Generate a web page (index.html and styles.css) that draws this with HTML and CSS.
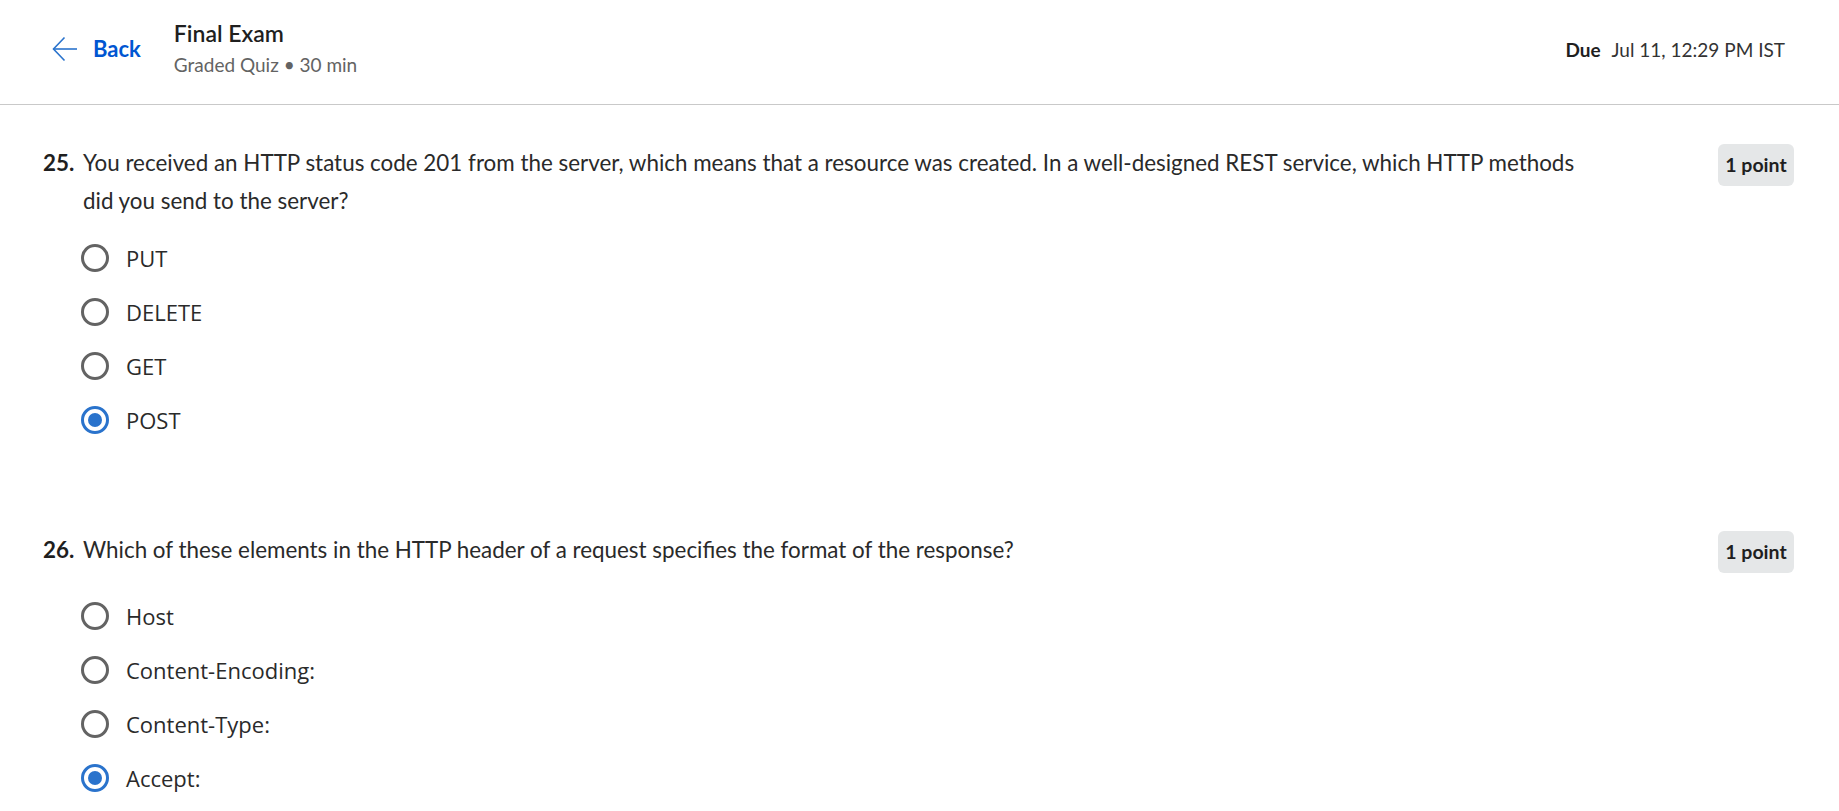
FILE: index.html
```html
<!DOCTYPE html>
<html>
<head>
<meta charset="utf-8">
<link rel="stylesheet" href="styles.css">
</head>
<body>
<header class="topbar">
  <div class="topbar-left">
    <a class="back" href="#">
      <svg class="back-icon" width="26" height="26" viewBox="0 0 26 26" fill="none" stroke="currentColor" stroke-width="1.6">
        <path d="M25 13H1.5"/>
        <path d="M12.5 1.5L1.5 13l11 11.5"/>
      </svg>
      <span>Back</span>
    </a>
    <div class="title-block">
      <div class="title">Final Exam</div>
      <div class="subtitle">Graded Quiz • 30 min</div>
    </div>
  </div>
  <div class="due"><b>Due</b><span>Jul 11, 12:29 PM IST</span></div>
</header>

<main class="content">
  <section class="question q1">
    <div class="q-head">
      <span class="q-num">25.</span>
      <p class="q-text">You received an HTTP status code 201 from the server, which means that a resource was created. In a well-designed REST service, which HTTP methods did you send to the server?</p>
      <span class="badge">1 point</span>
    </div>
    <ul class="options">
      <li class="option"><span class="radio"></span><span class="label">PUT</span></li>
      <li class="option"><span class="radio"></span><span class="label">DELETE</span></li>
      <li class="option"><span class="radio"></span><span class="label">GET</span></li>
      <li class="option"><span class="radio checked"></span><span class="label">POST</span></li>
    </ul>
  </section>

  <section class="question q2">
    <div class="q-head">
      <span class="q-num">26.</span>
      <p class="q-text">Which of these elements in the HTTP header of a request specifies the format of the response?</p>
      <span class="badge">1 point</span>
    </div>
    <ul class="options">
      <li class="option"><span class="radio"></span><span class="label">Host</span></li>
      <li class="option"><span class="radio"></span><span class="label">Content-Encoding:</span></li>
      <li class="option"><span class="radio"></span><span class="label">Content-Type:</span></li>
      <li class="option"><span class="radio checked"></span><span class="label">Accept:</span></li>
    </ul>
  </section>
</main>
</body>
</html>
```

FILE: styles.css
```css
* { box-sizing: border-box; }
html, body { margin: 0; padding: 0; background: #fff; }
body {
  font-family: Lato, "Liberation Sans", sans-serif;
  color: #1f1f1f;
  overflow: hidden;
}

.topbar {
  height: 105px;
  border-bottom: 1px solid #c9c9c9;
  display: flex;
  justify-content: space-between;
  align-items: flex-start;
  padding: 0 54px 0 52px;
}
.topbar-left { display: flex; align-items: flex-start; }
.back {
  display: flex;
  align-items: center;
  color: #0056d2;
  text-decoration: none;
  font-weight: 700;
  font-size: 22px;
  margin-top: 36px;
  height: 26px;
}
.back-icon { color: #2a73cc; margin-right: 15px; }
.back span { line-height: 26px; }
.title-block { margin-left: 33px; margin-top: 19px; }
.title { font-size: 23px; font-weight: 600; color: #1f1f1f; line-height: 28px; }
.subtitle { font-size: 19px; color: #636363; line-height: 26px; margin-top: 5px; }
.due { margin-top: 38px; font-size: 19px; line-height: 24px; color: #333; }
.due b { font-weight: 700; color: #1f1f1f; margin-right: 11px; }

.content { padding: 39px 45px 0 43px; }
.question { margin-bottom: 84px; }
.q-head { display: flex; align-items: flex-start; }
.q-num { font-weight: 700; font-size: 22.4px; line-height: 37.5px; width: 40px; flex: none; }
.q-text {
  margin: 0;
  font-size: 22.4px;
  line-height: 37.5px;
  color: #2a2a2a;
  flex: 0 1 1525px;
}
.badge {
  flex: none;
  margin-left: auto;
  background: #e5e7e8;
  border-radius: 6px;
  font-weight: 700;
  font-size: 19.5px;
  height: 42px;
  line-height: 42px;
  width: 76px;
  text-align: center;
  color: #1f1f1f;
}

.options { list-style: none; margin: 12px 0 0 0; padding: 0 0 0 38px; }
.q2 .options { margin-top: 16px; }
.option { display: flex; align-items: center; height: 54px; }
.radio {
  width: 28px;
  height: 28px;
  border: 3px solid #636363;
  border-radius: 50%;
  flex: none;
  margin-right: 17px;
  display: flex;
  align-items: center;
  justify-content: center;
}
.radio.checked { border-color: #2a73cc; }
.radio.checked::after {
  content: "";
  width: 14px;
  height: 14px;
  border-radius: 50%;
  background: #2a73cc;
}
.label { font-family: "Open Sans", sans-serif; font-size: 22px; color: #2a2a2a; }
```
